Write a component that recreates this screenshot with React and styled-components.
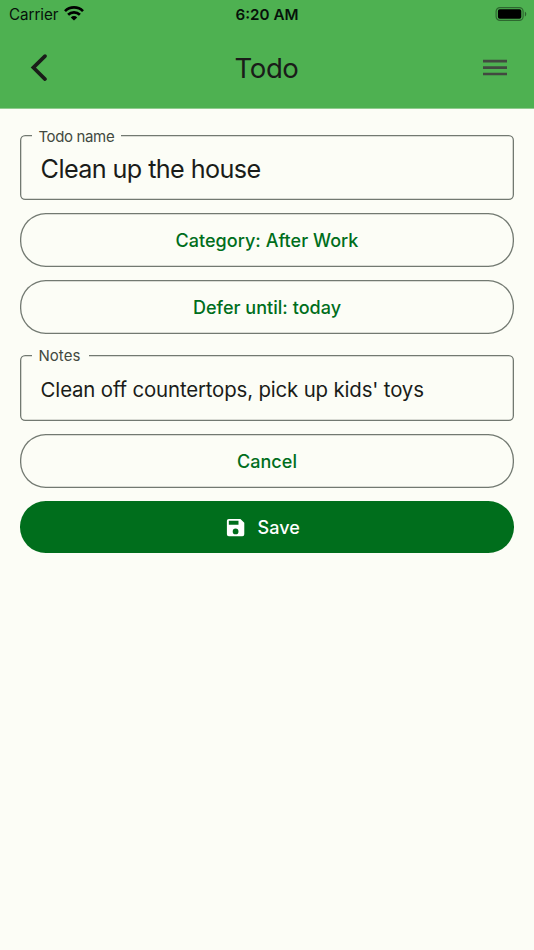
import React from "react";
import styled, { createGlobalStyle } from "styled-components";

const GlobalStyle = createGlobalStyle`
  * { box-sizing: border-box; }
  body { margin: 0; background: #fcfdf6; }
`;

const Screen = styled.div`
  min-height: 950px;
  background: #fcfdf6;
  color: #1a1c19;
  font-family: Inter, "Liberation Sans", sans-serif;
`;

const Header = styled.header`
  height: 109px;
  border-bottom: 1px solid #8fcc8e;
  background: #4eb151;
`;

const StatusBar = styled.div`
  display: grid;
  grid-template-columns: 1fr auto 1fr;
  align-items: center;
  height: 27px;
  padding: 0 7px 0 9px;
  color: #06110a;
`;

const Carrier = styled.div`
  display: flex;
  align-items: center;
  gap: 6px;
  font-size: 15.2px;
  letter-spacing: -0.05px;
  line-height: 27px;

  svg { margin-bottom: 2px; }
`;

const Clock = styled.div`
  padding: 1px 2px 0 0;
  font-size: 15.2px;
  font-weight: 600;
  letter-spacing: 0;
  line-height: 27px;
`;

const Battery = styled.svg`
  justify-self: end;
`;

const NavBar = styled.nav`
  display: grid;
  grid-template-columns: 1fr auto 1fr;
  align-items: center;
  height: 81px;
  padding: 0 27px 0 30px;
`;

const Title = styled.h1`
  margin: 0;
  padding-right: 4px;
  font-size: 27.6px;
  font-weight: 400;
  letter-spacing: -0.45px;
  line-height: 36px;
`;

const IconButton = styled.button`
  display: flex;
  justify-self: ${(p) => p.$side};
  padding: 0;
  border: 0;
  background: none;
`;

const Form = styled.main`
  display: flex;
  flex-direction: column;
  padding: 26px 19.6px 0;
`;

const Field = styled.div`
  position: relative;
  display: flex;
  align-items: center;
  height: ${(p) => p.$height}px;
  margin-bottom: 13px;
  padding: ${(p) => p.$drop}px 21px 0;
  border-radius: 5.2px;
  box-shadow: inset 0 0 0 1.3px #727971;
`;

const FieldLabel = styled.label`
  position: absolute;
  left: 12.2px;
  top: ${(p) => p.$top}px;
  width: ${(p) => p.$width}px;
  padding-left: 6.6px;
  background: #fcfdf6;
  color: #424940;
  font-size: 15px;
  letter-spacing: ${(p) => p.$tracking}px;
  line-height: 20px;
  white-space: nowrap;
`;

const FieldValue = styled.div`
  font-size: ${(p) => p.$size}px;
  letter-spacing: ${(p) => p.$tracking}px;
  line-height: 32px;
  white-space: nowrap;
`;

const Button = styled.button`
  display: flex;
  align-items: center;
  justify-content: center;
  gap: 10.2px;
  height: ${(p) => (p.$filled ? 52 : 54)}px;
  margin: 0 0 ${(p) => p.$gap ?? 13}px;
  padding: ${(p) => (p.$filled ? "1px 10px 0 0" : "1px 0 0")};
  border: 0;
  border-radius: 25.8px;
  background: ${(p) => (p.$filled ? "#006e1c" : "transparent")};
  box-shadow: ${(p) => (p.$filled ? "none" : "inset 0 0 0 1.3px #727971")};
  color: ${(p) => (p.$filled ? "#ffffff" : "#006e1c")};
  font-family: inherit;
  font-size: 18px;
  font-weight: 500;
  letter-spacing: 0.03px;
  line-height: 26px;
`;

function WifiIcon() {
  return (
    <svg width="20" height="15" viewBox="0 0 20 15" fill="none" stroke="#000" strokeWidth="2.7">
      <path d="M1 5.1A12.8 12.8 0 0 1 19 5.1" />
      <path d="M4.1 8.7A8.4 8.4 0 0 1 15.9 8.7" />
      <path d="M10 14.6 6.8 11.4a4.5 4.5 0 0 1 6.4 0Z" fill="#000" stroke="none" />
    </svg>
  );
}

function SaveIcon() {
  return (
    <svg width="23.2" height="23.2" viewBox="0 0 24 24" fill="currentColor">
      <path d="M15 9H5V5h10m-3 14a3 3 0 0 1-3-3 3 3 0 0 1 3-3 3 3 0 0 1 3 3 3 3 0 0 1-3 3m5-16H5a2 2 0 0 0-2 2v14a2 2 0 0 0 2 2h14a2 2 0 0 0 2-2V7l-4-4Z" />
    </svg>
  );
}

export default function App() {
  return (
    <Screen>
      <GlobalStyle />
      <Header>
        <StatusBar>
          <Carrier>
            Carrier
            <WifiIcon />
          </Carrier>
          <Clock>6:20 AM</Clock>
          <Battery width="32" height="14" viewBox="0 0 32 14">
            <rect x="1.1" y="0.6" width="27" height="12.8" rx="3.8" fill="none" stroke="#000" strokeOpacity="0.42" strokeWidth="1.2" />
            <rect x="2.9" y="2.3" width="23.4" height="9.4" rx="1.8" fill="#000" />
            <path d="M29.9 4.8v4.6c1.8-.7 1.8-3.9 0-4.6Z" fill="#000" fillOpacity="0.45" />
          </Battery>
        </StatusBar>
        <NavBar>
          <IconButton $side="start" aria-label="Back">
            <svg width="18" height="28" viewBox="0 0 18 28" fill="none" stroke="#1a1c19" strokeWidth="3.6" strokeLinecap="round" strokeLinejoin="miter">
              <path d="M15 2.1 3.3 13.6 15 25.1" />
            </svg>
          </IconButton>
          <Title>Todo</Title>
          <IconButton $side="end" aria-label="Menu">
            <svg width="25" height="18" viewBox="0 0 25 18" fill="#424940">
              <path d="M1 .8h24v2.6H1zM1 7.3h24v2.6H1zM1 13.7h24v2.6H1z" />
            </svg>
          </IconButton>
        </NavBar>
      </Header>
      <Form>
        <Field $height={65} $drop={2}>
          <FieldLabel $top={-8} $width={89} $tracking={-0.35}>Todo name</FieldLabel>
          <FieldValue $size={25.2} $tracking={-0.6}>Clean up the house</FieldValue>
        </Field>
        <Button>Category: After Work</Button>
        <Button $gap={21}>Defer until: today</Button>
        <Field $height={66} $drop={3}>
          <FieldLabel $top={-9} $width={57.5} $tracking={0.1}>Notes</FieldLabel>
          <FieldValue $size={20.4} $tracking={-0.15}>Clean off countertops, pick up kids' toys</FieldValue>
        </Field>
        <Button>Cancel</Button>
        <Button $filled>
          <SaveIcon />
          Save
        </Button>
      </Form>
    </Screen>
  );
}
